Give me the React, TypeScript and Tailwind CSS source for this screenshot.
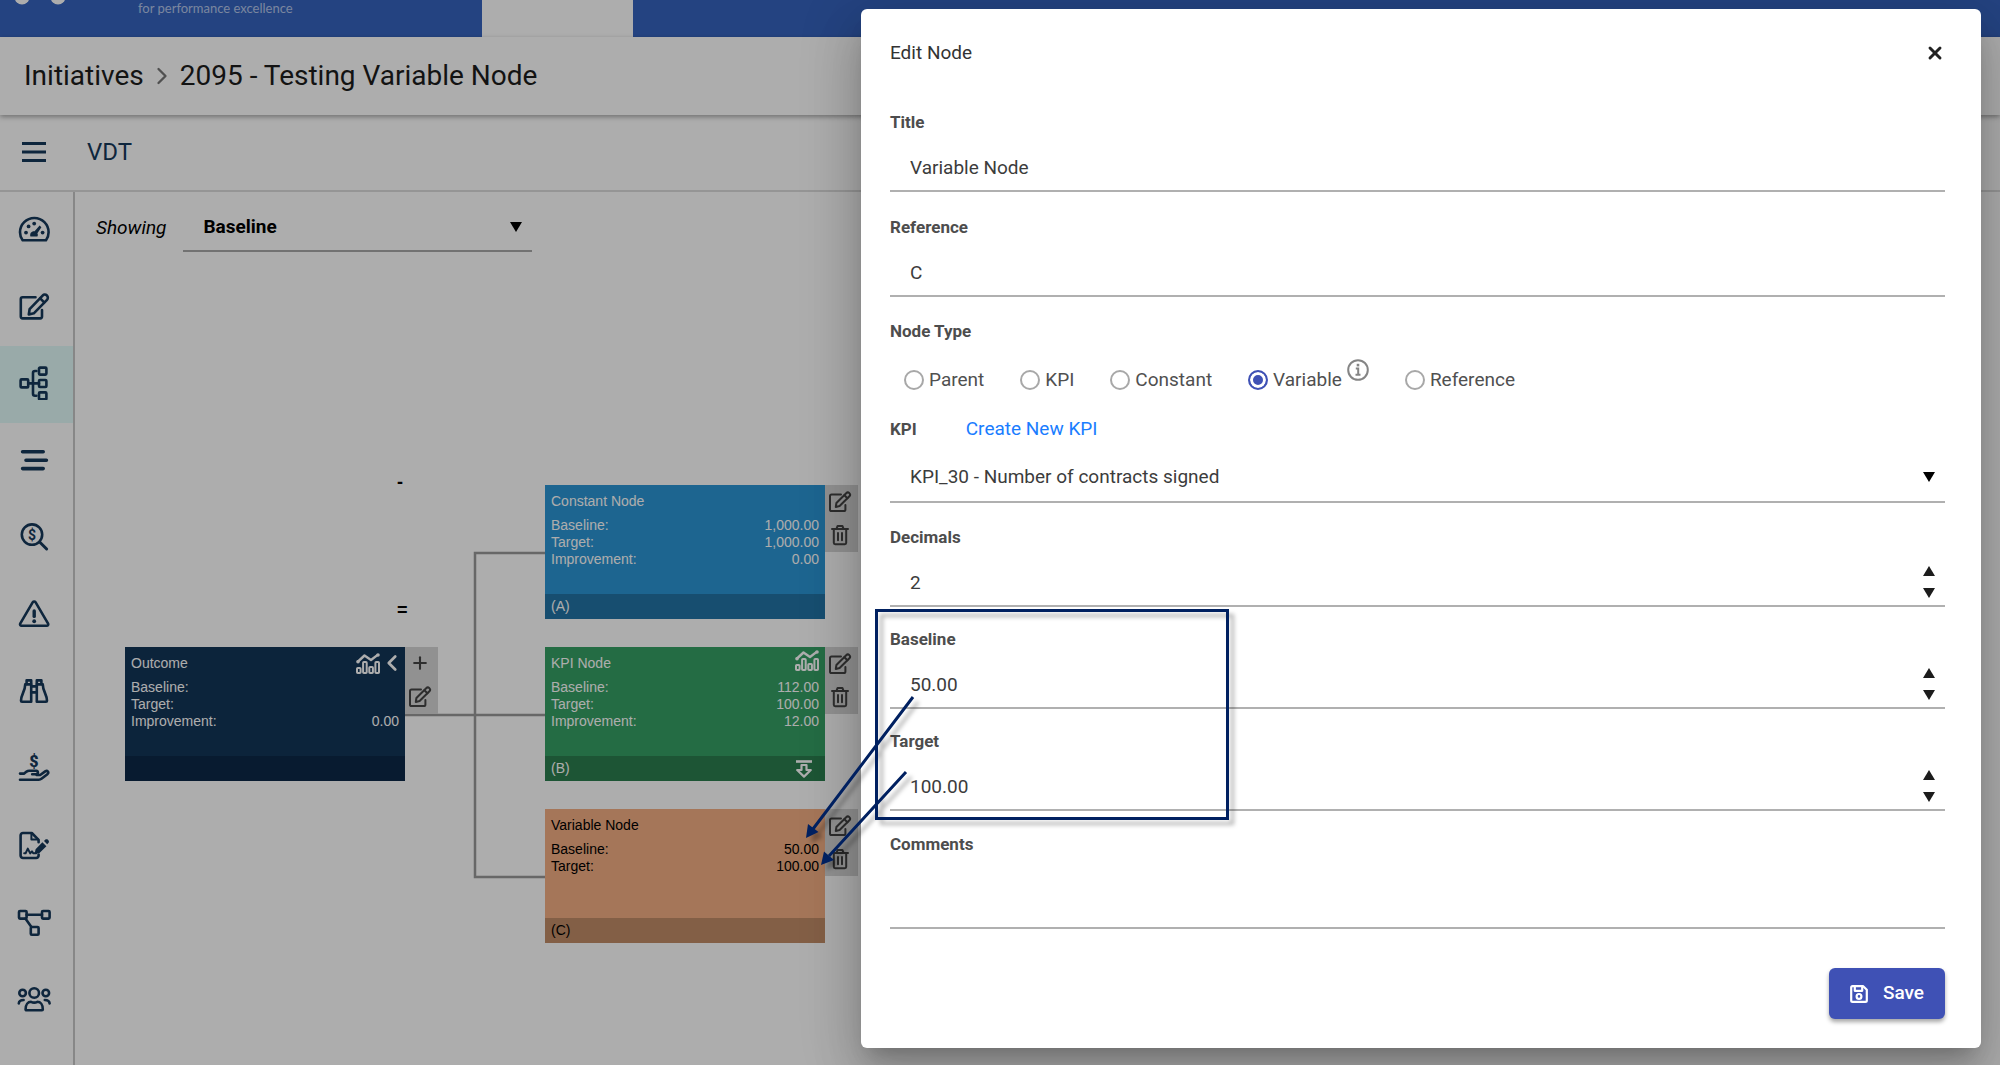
import { useState } from 'react';
import type { ReactNode } from 'react';
import { Plus, ChevronLeft, ChevronRight, X } from 'lucide-react';
import { clsx } from 'clsx';

interface IconProps {
  children: ReactNode;
}

function SideIcon({ children }: IconProps) {
  return (
    <svg
      viewBox="0 0 34 34"
      className="size-[34px]"
      fill="none"
      stroke="currentColor"
      strokeWidth="2.6"
      strokeLinecap="round"
      strokeLinejoin="round"
      aria-hidden="true"
    >
      {children}
    </svg>
  );
}

const sideItems = [
  {
    name: 'Dashboard',
    icon: (
      <SideIcon>
        <path d="M5.6 28.3C3.9 26 3 23.3 3 20.3a14.3 14.3 0 0 1 28.6 0c0 3-.9 5.7-2.6 8z" />
        <g fill="currentColor" stroke="none">
          <circle cx="9" cy="20.6" r="1.9" />
          <circle cx="11.6" cy="14.4" r="1.9" />
          <circle cx="17.2" cy="11.6" r="1.9" />
          <circle cx="25.6" cy="20.6" r="1.9" />
          <path d="M13.4 24.6c-.8-3.200.8-5.600 4.200-5.400l5-5.600 1.800 1.600-4 6c.7 1.200.5 2.400 0 3.400z" />
        </g>
      </SideIcon>
    ),
  },
  {
    name: 'Edit',
    icon: (
      <SideIcon>
        <path d="M18.5 8.2H5.6A1.8 1.8 0 0 0 3.8 10v17.6a1.8 1.8 0 0 0 1.8 1.8h17.6a1.8 1.8 0 0 0 1.8-1.8V21" />
        <path d="m12.6 20.2 13-13.6a3 3 0 0 1 4.4 4.2L16.8 24.3l-5 1.2z" />
        <path d="m23.2 9.3 4 4" />
      </SideIcon>
    ),
  },
  {
    name: 'Value driver tree',
    icon: (
      <SideIcon>
        <rect x="3.6" y="13.4" width="7.6" height="8" rx="1" />
        <rect x="22" y="1.6" width="7.4" height="7" rx="1" />
        <rect x="22" y="14" width="7.4" height="7" rx="1" />
        <rect x="22" y="26.4" width="7.4" height="7" rx="1" />
        <path d="M11.2 17.4H22M19.4 5H18a2 2 0 0 0-2 2v20.8a2 2 0 0 0 2 2h1.4" />
      </SideIcon>
    ),
  },
  {
    name: 'Plan',
    icon: (
      <SideIcon>
        <path strokeWidth="3.6" d="M5.6 8.8h20.6M9 17.2h20.4M5.6 25.6h20.6" />
      </SideIcon>
    ),
  },
  {
    name: 'Benefits',
    icon: (
      <SideIcon>
        <circle cx="15" cy="14.6" r="10.2" />
        <path strokeWidth="3" d="m22.6 22 7 7" />
        <text x="15" y="19.6" textAnchor="middle" fontSize="14" fontWeight="700" fontFamily="Roboto, sans-serif" fill="currentColor" stroke="none">$</text>
      </SideIcon>
    ),
  },
  {
    name: 'Risks',
    icon: (
      <SideIcon>
        <path d="M15.8 5.2a1.6 1.6 0 0 1 2.7 0l12.6 21.4a1.5 1.5 0 0 1-1.3 2.2H4.5a1.5 1.5 0 0 1-1.3-2.2z" />
        <path strokeWidth="3.4" d="M17.2 14v5.4" />
        <path strokeWidth="3.8" d="M17.2 24.2v.1" />
      </SideIcon>
    ),
  },
  {
    name: 'Insights',
    icon: (
      <SideIcon>
        <path d="M9.2 10.4h5v17.4H5a1 1 0 0 1-1-1c0-6.6 4.2-9.4 4.2-16.4zM24.8 10.4h-5v17.4H29a1 1 0 0 0 1-1c0-6.6-4.2-9.4-4.2-16.4z" />
        <path d="M9.6 10V6.4h4.6V10M19.8 10V6.4h4.6V10M14.2 12.4h5.6M14.2 18.4h5.6" />
      </SideIcon>
    ),
  },
  {
    name: 'Funding',
    icon: (
      <SideIcon>
        <text x="17" y="15.6" textAnchor="middle" fontSize="16" fontWeight="900" fontFamily="Roboto, sans-serif" fill="currentColor" stroke="none">$</text>
        <path d="M3 22.6h4.2l2.4-2c.8-.6 1.6-.8 2.6-.8h7.2c1.8 0 2.2 3.4 0 3.4h-4.2M19.6 24h3.6l5-3.6c2.2-1.4 4.2.8 2.2 2.8L24.800 27.600c-1 .8-1.800 1.200-3 1.200H3" />
      </SideIcon>
    ),
  },
  {
    name: 'Sign off',
    icon: (
      <SideIcon>
        <path d="M21.6 26.6v1a2.4 2.4 0 0 1-2.4 2.4H6a2.4 2.4 0 0 1-2.4-2.4V7.4A2.4 2.4 0 0 1 6 5h8.800l6.800 6.800v2.400" />
        <path d="M14.4 5.4v6.2h6.8M7.2 25.2h1.4l2.2-4.600 2.400 4.800 1.800-2 1.200 1.800h3" strokeWidth="2" />
        <path fill="currentColor" stroke="none" d="m18.600 21.200 6.800-7 4 4-6.900 6.900-5 1zM27 13l1.400-1.400c1.800-1.400 4.600 1.200 3.200 3.100l-1.400 1.500z" />
      </SideIcon>
    ),
  },
  {
    name: 'Dependencies',
    icon: (
      <SideIcon>
        <rect x="2" y="6" width="7.6" height="7.6" rx="1" />
        <rect x="25" y="6" width="7.6" height="7.6" rx="1" />
        <rect x="13.8" y="22" width="7.8" height="7.8" rx="1" />
        <path d="M9.6 9.8H25M8.4 13.6l6 8.4" />
      </SideIcon>
    ),
  },
  {
    name: 'Team',
    icon: (
      <SideIcon>
        <circle cx="17.2" cy="11" r="4.8" />
        <circle cx="5.6" cy="11" r="3.3" />
        <circle cx="28.8" cy="11" r="3.3" />
        <path d="M8.6 27.400c0-5 2.400-7.600 5.400-7.600 2 1 4.400 1 6.400 0 3 0 5.400 2.600 5.400 7.600 0 .4-.4.8-.8.8H9.400a.8.8 0 0 1-.8-.8zM1.800 21.400c.2-2.200 1.600-3.400 4.800-3.400M32.600 21.400c-.2-2.200-1.600-3.400-4.800-3.400" />
      </SideIcon>
    ),
  },
];

function EditIcon() {
  return (
    <svg viewBox="0 0 24 22" className="h-[22px] w-6" fill="none" stroke="currentColor" strokeWidth="2" strokeLinejoin="round" strokeLinecap="round" aria-hidden="true">
      <path d="M13 3.500H3.600A1.600 1.600 0 0 0 2 5.100v13.300A1.600 1.600 0 0 0 3.600 20h12.200a1.600 1.600 0 0 0 1.600-1.600V14" />
      <path d="m8.400 12 9.800-9.800a2.200 2.200 0 0 1 3.200 3.100L11.600 15l-3.800 1z" />
      <path d="m16.400 4.200 3 3" />
    </svg>
  );
}

function TrashIcon() {
  return (
    <svg viewBox="0 0 20 22" className="h-[22px] w-5" fill="none" stroke="currentColor" strokeWidth="2" strokeLinejoin="round" strokeLinecap="round" aria-hidden="true">
      <path d="M2 5h16M6.400 4.800 7.600 2h4.800l1.200 2.800M3.800 5.200v13.600c0 .8.6 1.400 1.400 1.400h9.600c.8 0 1.400-.6 1.400-1.400V5.200M8 9v7.200M12 9v7.200" />
    </svg>
  );
}

function ChartIcon() {
  return (
    <svg viewBox="0 0 24 21" className="h-[21px] w-6" fill="none" stroke="currentColor" strokeWidth="2" strokeLinejoin="round" aria-hidden="true">
      <path strokeWidth="2.4" d="m1.5 9 7-6.500L15 7l7-5.400" />
      <circle cx="2" cy="8.800" r="1.800" fill="currentColor" stroke="none" />
      <circle cx="22" cy="2" r="1.800" fill="currentColor" stroke="none" />
      <rect x="1" y="15" width="3.600" height="5" rx=".8" />
      <rect x="7.100" y="9" width="3.600" height="11" rx=".8" />
      <rect x="13.300" y="14" width="3.600" height="6" rx=".8" />
      <rect x="19.400" y="9" width="3.600" height="11" rx=".8" />
    </svg>
  );
}

function DrillIcon() {
  return (
    <svg viewBox="0 0 18 18" className="size-[18px]" fill="none" stroke="currentColor" strokeWidth="2.2" strokeLinejoin="round" aria-hidden="true">
      <path strokeWidth="2.6" d="M1 1.500h16" />
      <path d="M6.500 5h5v5h4.300L9 16.600 2.200 10h4.300z" />
    </svg>
  );
}

function Caret({ up = false }: { up?: boolean }) {
  return (
    <svg viewBox="0 0 12 10" className="h-[10px] w-3" fill="currentColor" aria-hidden="true">
      <path d={up ? 'M6 0l6 10H0z' : 'M0 0h12L6 10z'} />
    </svg>
  );
}

interface TreeNodeProps {
  title: string;
  rows: [string, string][];
  code?: string;
  place: string;
  body: string;
  foot: string;
  root?: boolean;
  chart?: boolean;
  drill?: boolean;
}

function TreeNode({ title, rows, code, place, body, foot, root, chart, drill }: TreeNodeProps) {
  return (
    <article className={clsx('absolute flex items-start', place)}>
      <div className={clsx('flex h-[134px] w-[280px] flex-col font-["Liberation_Sans",Arial,sans-serif] text-sm leading-[17px]', body)}>
        <div className="flex h-8 items-start justify-between px-[6px]">
          <h3 className="pt-2">{title}</h3>
          <div className="flex items-center gap-[5px] pt-[3px]">
            {chart && <ChartIcon />}
            {root && (
              <button aria-label="Collapse" className="flex w-[14px] justify-center">
                <ChevronLeft className="size-[26px] shrink-0" strokeWidth={2.5} />
              </button>
            )}
          </div>
        </div>
        <dl className="flex-1 px-[6px]">
          {rows.map(([name, value]) => (
            <div key={name} className="flex justify-between">
              <dt>{name}:</dt>
              <dd>{value}</dd>
            </div>
          ))}
        </dl>
        <footer className={clsx('flex h-[25px] items-center justify-between px-[6px]', foot)}>
          <span>{code}</span>
          {drill && (
            <button aria-label="Drill down" className="pr-[6px]">
              <DrillIcon />
            </button>
          )}
        </footer>
      </div>
      <div className="flex h-[67px] w-[33px] flex-col items-center justify-around bg-[#d6d6d6] pr-1 text-[#444]">
        {root && (
          <button aria-label="Add node">
            <Plus className="size-5" strokeWidth={2.5} />
          </button>
        )}
        <button aria-label={'Edit ' + title}>
          <EditIcon />
        </button>
        {!root && (
          <button aria-label={'Delete ' + title}>
            <TrashIcon />
          </button>
        )}
      </div>
    </article>
  );
}

const labelClass = 'block text-[17px] leading-6 font-bold text-[#4d4d4d]';
const lineClass = 'relative flex h-12 items-center border-b-2 border-[#b0b0b0]';
const inputClass = 'h-full w-full appearance-none bg-transparent pl-5 text-[19px] text-[#3c3c3c] outline-none';

interface FieldProps {
  id: string;
  label: string;
  value: string;
  spinner?: boolean;
}

function Field({ id, label, value, spinner }: FieldProps) {
  return (
    <div className="flex flex-col gap-[10px]">
      <label htmlFor={id} className={labelClass}>{label}</label>
      <div className={lineClass}>
        <input id={id} defaultValue={value} className={inputClass} />
        {spinner && (
          <div className="flex flex-col pr-[10px] text-[#1c1c1c]">
            <button type="button" aria-label={'Increase ' + label} className="flex h-[22px] items-center">
              <Caret up />
            </button>
            <button type="button" aria-label={'Decrease ' + label} className="flex h-[22px] items-center">
              <Caret />
            </button>
          </div>
        )}
      </div>
    </div>
  );
}

const nodeTypes = ['Parent', 'KPI', 'Constant', 'Variable', 'Reference'];

function EditNodeDialog() {
  const [type, setType] = useState('Variable');

  return (
    <form
      role="dialog"
      aria-labelledby="dialog-title"
      onSubmit={(e) => e.preventDefault()}
      className="mt-[9px] mr-[19px] w-[56%] self-start rounded-md bg-white pt-8 pr-9 pb-[29px] pl-[29px] shadow-[0_14px_19px_-9px_rgba(0,0,0,0.2),0_30px_48px_4px_rgba(0,0,0,0.14),0_11px_58px_10px_rgba(0,0,0,0.12)]"
    >
      <header className="flex h-6 items-center justify-between">
        <h2 id="dialog-title" className="text-[19px] text-[#333]">Edit Node</h2>
        <button type="button" aria-label="Close">
          <X className="size-5 text-[#222]" strokeWidth={3.5} />
        </button>
      </header>

      <div className="mt-[45px] flex flex-col gap-[23px]">
        <Field id="title" label="Title" value="Variable Node" />
        <Field id="reference" label="Reference" value="C" />
      </div>

      {/* Node type */}
      <fieldset className="mt-[22px]">
        <legend className={labelClass}>Node Type</legend>
        <div className="mt-[25px] flex h-6 items-center gap-9 pl-[14px] text-[19px] text-[#505050]">
          {nodeTypes.map((name) => (
            <div key={name} className="flex items-center">
              <label className="flex items-center gap-[5px]">
                <input
                  type="radio"
                  name="node-type"
                  checked={type === name}
                  onChange={() => setType(name)}
                  className="size-5 appearance-none rounded-full border-2 border-[#a8a8a8] checked:border-[#3f51b5] checked:bg-[#3f51b5] checked:shadow-[inset_0_0_0_3px_white]"
                />
                {name}
              </label>
              {name === 'Variable' && (
                <svg viewBox="0 0 22 22" className="mb-5 ml-[5px] size-[22px]" fill="none" stroke="#858585" strokeWidth="2" aria-label="Info">
                  <circle cx="11" cy="11" r="9.8" />
                  <path d="M8.8 9.5h2.4v6M8.5 15.8h5" />
                  <path strokeWidth="2.6" d="M11 4.8v2.6" />
                </svg>
              )}
            </div>
          ))}
        </div>
      </fieldset>

      {/* Linked KPI */}
      <div className="mt-[25px] flex flex-col gap-[14px]">
        <div className="flex h-6 items-center gap-[49px]">
          <label htmlFor="kpi" className={labelClass}>KPI</label>
          <a href="#create" className="text-[19px] text-[#1a7dff]">Create New KPI</a>
        </div>
        <div className={lineClass}>
          <select id="kpi" className={clsx(inputClass, 'pb-[2px]')}>
            <option>KPI_30 - Number of contracts signed</option>
          </select>
          <span className="pointer-events-none absolute right-[10px] pb-[2px]">
            <Caret />
          </span>
        </div>
      </div>

      <div className="mt-[22px] flex flex-col gap-5">
        <Field id="decimals" label="Decimals" value="2" spinner />
        <Field id="baseline" label="Baseline" value="50.00" spinner />
        <Field id="target" label="Target" value="100.00" spinner />
      </div>

      <div className="mt-[21px]">
        <label htmlFor="comments" className={labelClass}>Comments</label>
        <textarea id="comments" className="block h-[73px] w-full resize-none border-b-2 border-[#b0b0b0] pt-5 pl-5 text-[19px] outline-none" />
      </div>

      <div className="mt-[39px] flex justify-end">
        <button
          type="submit"
          className="flex h-[51px] items-center gap-[15px] rounded-md bg-[#3f51b5] px-[21px] text-[19px] font-medium text-white shadow-[0_3px_4px_rgba(0,0,0,0.35)]"
        >
          <svg viewBox="0 0 18 18" className="size-[18px]" fill="none" stroke="currentColor" strokeWidth="2.2" strokeLinejoin="round" aria-hidden="true">
            <path d="M1.2 2.600c0-.8.6-1.400 1.400-1.400h10.600l3.600 3.600v10.600c0 .8-.6 1.400-1.400 1.400H2.600c-.8 0-1.400-.6-1.400-1.400z" />
            <path d="M4.800 1.500v4.300h7.400V1.500" />
            <circle cx="9" cy="11.400" r="2.400" />
          </svg>
          Save
        </button>
      </div>
    </form>
  );
}

// Frame and arrows that tie the form values to the node on the canvas
function Callouts() {
  return (
    <svg className="pointer-events-none absolute inset-0 size-full drop-shadow-[5px_5px_2px_rgba(0,0,0,0.3)]" fill="none" stroke="#002060" strokeWidth="3" aria-hidden="true">
      <rect x="876.5" y="610.5" width="351" height="208" />
      <path d="M913 697 813 829M906 772 829 856" />
      <path fill="#002060" stroke="none" d="M806 838l2-14 10.500 8zM821 865l3-13.500 10 8.500z" />
    </svg>
  );
}

export default function App() {
  return (
    <div className="relative flex min-h-screen flex-col overflow-hidden bg-white font-[Roboto,sans-serif]">
      <header className="flex h-[37px] shrink-0 bg-[#3664bf]">
        <div className="flex w-[482px] items-start">
          <svg viewBox="0 0 138 37" className="h-[37px] w-[138px] shrink-0" fill="#fff" aria-hidden="true">
            <circle cx="22" cy="-3" r="7.5" />
            <circle cx="58" cy="-3" r="7.5" />
          </svg>
          <span className="font-[Lato,sans-serif] text-[13px] leading-4 whitespace-nowrap text-[#b5c6ea]">for performance excellence</span>
        </div>
        <div className="w-[151px] bg-white" />
      </header>

      <nav aria-label="Breadcrumb" className="relative flex h-[78px] shrink-0 items-center gap-1 pl-6 text-[28px] text-[#1c1c1c] shadow-[0_2px_5px_rgba(0,0,0,0.35)]">
        <a href="#initiatives">Initiatives</a>
        <ChevronRight className="size-7 text-[#777]" strokeWidth={2} />
        <h1>2095 - Testing Variable Node</h1>
      </nav>

      <div className="flex h-[77px] shrink-0 items-center border-b-2 border-[#dcdcdc] pb-[2px] text-[#16385a]">
        <button aria-label="Menu" className="flex w-[87px] pl-[22px]">
          <svg viewBox="0 0 24 20" className="h-5 w-6" stroke="currentColor" strokeWidth="3" aria-hidden="true">
            <path d="M0 1.5h24M0 10h24M0 18.500h24" />
          </svg>
        </button>
        <h2 className="text-2xl">VDT</h2>
      </div>

      <div className="flex flex-1">
        <nav aria-label="Sections" className="w-[75px] shrink-0 border-r-2 border-[#c8c8c8]">
          <ul>
            {sideItems.map((item) => (
              <li key={item.name}>
                <a
                  href="#section"
                  aria-label={item.name}
                  className={clsx(
                    'flex h-[77px] items-center pb-1 pl-[17px] text-[#16385a]',
                    item.name === 'Value driver tree' && 'bg-[#e2fbfa]'
                  )}
                >
                  {item.icon}
                </a>
              </li>
            ))}
          </ul>
        </nav>

        <main className="relative flex-1 pt-3 pl-[21px]">
          <div className="flex items-center gap-[17px] text-[19px]">
            <label htmlFor="showing" className="italic">Showing</label>
            <div className="relative flex h-12 w-[349px] items-center border-b-2 border-[#a8a8a8]">
              <select id="showing" className="h-full w-full appearance-none pl-5 font-bold outline-none">
                <option>Baseline</option>
              </select>
              <span className="pointer-events-none absolute right-[10px]">
                <Caret />
              </span>
            </div>
          </div>

          {/* Connectors */}
          <svg className="absolute top-0 left-0 h-[800px] w-[600px]" fill="none" stroke="#999" strokeWidth="2.5" aria-hidden="true">
            <path d="M330 523h140M470 361h-70v324h70" />
          </svg>

          <TreeNode
            title="Outcome"
            rows={[['Baseline', ''], ['Target', ''], ['Improvement', '0.00']]}
            place="left-[50px] top-[455px]"
            body="bg-[#133558] text-white"
            foot="bg-[#0d2947]"
            root
            chart
          />
          <TreeNode
            title="Constant Node"
            rows={[['Baseline', '1,000.00'], ['Target', '1,000.00'], ['Improvement', '0.00']]}
            code="(A)"
            place="left-[470px] top-[293px]"
            body="bg-[#2c95d4] text-white"
            foot="bg-[#2374a5]"
          />
          <TreeNode
            title="KPI Node"
            rows={[['Baseline', '112.00'], ['Target', '100.00'], ['Improvement', '12.00']]}
            code="(B)"
            place="left-[470px] top-[455px]"
            body="bg-[#36a065] text-white"
            foot="bg-[#2c7e4f]"
            chart
            drill
          />
          <TreeNode
            title="Variable Node"
            rows={[['Baseline', '50.00'], ['Target', '100.00']]}
            code="(C)"
            place="left-[470px] top-[617px]"
            body="bg-[#f3af84] text-black"
            foot="bg-[#c18c67]"
          />

          <span className="absolute top-[280px] left-[322px] font-['Liberation_Sans',Arial,sans-serif] text-lg leading-5 font-bold">-</span>
          <span className="absolute top-[408px] left-[322px] font-['Liberation_Sans',Arial,sans-serif] text-lg leading-5 font-bold">=</span>
        </main>
      </div>

      <div className="absolute inset-0 flex justify-end bg-black/32">
        <EditNodeDialog />
      </div>
      <Callouts />
    </div>
  );
}
